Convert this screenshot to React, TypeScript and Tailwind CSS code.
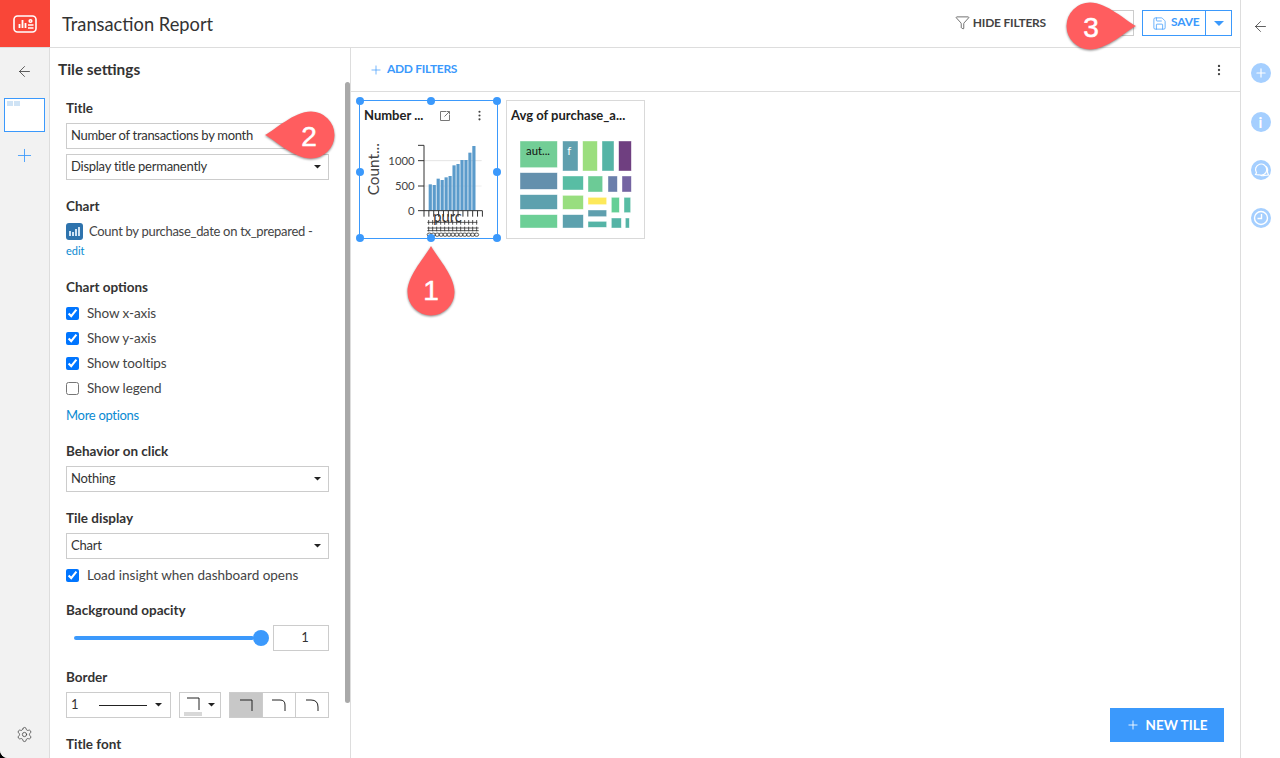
import React from "react";
import { ArrowLeft, Plus, Settings, Funnel, Save, EllipsisVertical } from "lucide-react";

const Caret = ({ color = "#222", w = 7 }: { color?: string; w?: number }) => (
  <svg width={w} height={w / 2} viewBox="0 0 10 5" className="shrink-0"><path d="M0 0h10L5 5z" fill={color} /></svg>
);

const Label = ({ children, className = "" }: { children: React.ReactNode; className?: string }) => (
  <div className={`h-4 text-[13.5px] leading-4 font-bold text-[#333] ${className}`}>{children}</div>
);

const Select = ({ text, className = "" }: { text: string; className?: string }) => (
  <div className={`flex h-[26px] items-center justify-between border border-[#ccc] bg-white pl-1 pr-[7px] text-[13px] tracking-[-0.25px] text-[#333] ${className}`}>
    <span>{text}</span>
    <Caret />
  </div>
);

const Check = ({ label, checked = true, className = "h-[25px]" }: { label: string; checked?: boolean; className?: string }) => (
  <label className={`flex items-center gap-2 text-[13.5px] tracking-[-0.1px] text-[#444] ${className}`}>
    <input type="checkbox" defaultChecked={checked} className="m-0 h-[13px] w-[13px] accent-[#0075ff]" />
    <span>{label}</span>
  </label>
);

const Handle = ({ className }: { className: string }) => (
  <span className={`absolute h-2 w-2 rounded-full bg-[#3b99fc] ${className}`} />
);

const Callout = ({ n, rot, className, numClass = "" }: { n: string; rot: number; className: string; numClass?: string }) => (
  <div className={`absolute flex h-[100px] w-[100px] items-center justify-center ${className}`}>
    <svg width="100" height="100" viewBox="-50 -50 100 100" className="absolute inset-0 overflow-visible drop-shadow-[0_1px_1px_rgba(0,0,0,0.45)]">
      <path transform={`rotate(${rot})`} d="M0 -46 C5 -36 23.5 -17 23.5 0 A23.5 23.5 0 0 1 -23.5 0 C-23.5 -17 -5 -36 0 -46Z" fill="#ff5d5f" />
    </svg>
    <span className={`relative text-[28px] leading-none text-white [-webkit-text-stroke:0.5px_white] [font-family:'Liberation_Sans',sans-serif] ${numClass}`}>{n}</span>
  </div>
);

const bars = [283, 285, 266, 270, 262, 258, 226, 222, 210, 210, 188, 168];
const lato = { fontFamily: "Lato, sans-serif" };

const BarChart = () => (
  <svg width="137" height="110" viewBox="30 114 411 330" className="block">
    <line x1="222" y1="212" x2="395" y2="212" stroke="#e4e4e4" strokeWidth="3" />
    <line x1="222" y1="288" x2="395" y2="288" stroke="#eee" strokeWidth="3" />
    {bars.map((t, i) => (
      <rect key={i} x={236 + i * 11.9} y={t} width="9.6" height={362 - t} fill="#5b9bcb" />
    ))}
    <path d="M222 166V362M204 166h18M204 212h18M204 288h18M204 362h193" stroke="#333" strokeWidth="3" fill="none" />
    {Array.from({ length: 13 }).map((_, i) => (
      <line key={i} x1={222 + i * 14.6} y1="362" x2={222 + i * 14.6} y2="380" stroke="#333" strokeWidth="3" />
    ))}
    <g fill="#444" fontSize="34" textAnchor="end" style={lato}>
      <text x="194" y="224">1000</text>
      <text x="194" y="300">500</text>
      <text x="194" y="374">0</text>
    </g>
    <text transform="translate(88 316) rotate(-90)" x="0" y="0" fontSize="46" fill="#444" style={lato}>Count...</text>
    <text x="250" y="396" fontSize="44" fill="#333" style={lato}>purc</text>
    <path d="M232 397h150M232 414h154M232 422h154" stroke="#333" strokeWidth="2.5" fill="none" />
    {Array.from({ length: 13 }).map((_, i) => (
      <g key={i}>
        <line x1={236 + i * 12} y1="390" x2={236 + i * 12} y2="404" stroke="#333" strokeWidth="2.5" />
        <line x1={236 + i * 12} y1="410" x2={236 + i * 12} y2="424" stroke="#333" strokeWidth="2.5" />
        <ellipse cx={238 + i * 11.8} cy="434" rx="6.5" ry="5" fill="none" stroke="#333" strokeWidth="2.5" />
      </g>
    ))}
  </svg>
);

const cells: [number, number, number, number, string][] = [
  [510, 153, 622, 233, "#72ce96"], [638, 153, 684, 243, "#5f9fae"], [698, 153, 742, 243, "#9bde7e"],
  [756, 153, 792, 243, "#55b4a6"], [806, 153, 844, 243, "#6f3f80"], [510, 248, 622, 298, "#6490ad"],
  [638, 258, 700, 300, "#58bda4"], [714, 258, 758, 306, "#6ccb96"], [774, 258, 802, 306, "#6b7fab"],
  [816, 258, 844, 306, "#7464a2"], [510, 314, 622, 358, "#5da1ae"], [638, 316, 700, 358, "#98de7f"],
  [714, 322, 770, 344, "#fde95a"], [784, 322, 808, 368, "#65cf96"], [822, 322, 842, 368, "#58bda4"],
  [510, 374, 622, 414, "#6ccf96"], [638, 374, 700, 414, "#5da1ae"], [714, 360, 770, 380, "#5f9fae"],
  [714, 394, 770, 412, "#55b4a6"], [784, 384, 814, 414, "#55b4a6"], [826, 384, 838, 414, "#55b4a6"],
];

const Treemap = () => (
  <svg width="137" height="110" viewBox="471 114 411 330" className="block">
    {cells.map(([a, b, c, d, f], i) => (
      <rect key={i} x={a} y={b} width={c - a} height={d - b} fill={f} stroke="#fff" strokeOpacity="0.6" strokeWidth="2" />
    ))}
    <text x="528" y="194" fontSize="34" fill="#111" style={lato}>aut...</text>
    <text x="652" y="194" fontSize="34" fill="#fff" style={lato}>f</text>
  </svg>
);

const RailIcon = ({ children }: { children: React.ReactNode }) => (
  <div className="flex h-5 w-5 items-center justify-center rounded-full bg-[#a5cfff] text-white">{children}</div>
);

const Corner = ({ r = 0, w = 12, gray = false }: { r?: number; w?: number; gray?: boolean }) => (
  <div className={`flex h-full flex-1 items-center justify-center ${gray ? "bg-[#c8c8c8]" : "bg-white"}`}>
    <svg width="14" height="14" viewBox="0 0 14 14"><path d={`M${13 - w} 2H${13 - r}Q13 2 13 ${2 + r}V13`} fill="none" stroke="#222" /></svg>
  </div>
);

export default function App() {
  return (
    <div className="h-[758px] w-[1280px] overflow-hidden bg-black [font-family:Lato,'Noto_Sans',sans-serif]">
      <div className="relative flex h-full w-full overflow-hidden rounded-bl-[8px] bg-white">
        <div className="flex min-w-0 flex-1 flex-col">
          <header className="flex h-12 shrink-0 border-b border-[#ddd]">
            <div className="flex h-[47px] w-[50px] shrink-0 items-center justify-center bg-[#f94638]">
              <svg width="24" height="18" viewBox="0 0 24 18" fill="none" stroke="#fff" strokeWidth="1.6">
                <rect x="1" y="1" width="22" height="16" rx="3.5" />
                <path d="M6.5 13V9M9.5 13V5M12.5 13V8" strokeWidth="1.8" />
                <circle cx="17.5" cy="6" r="1.3" />
                <path d="M15 10h5.5M15 13h5.5" />
              </svg>
            </div>
            <h1 className="ml-3 flex-1 self-center text-[18.3px] font-normal leading-6 text-[#333]">Transaction Report</h1>
            <div className="flex items-center pb-[2px] text-[12px] font-bold tracking-[-0.2px] text-[#444]">
              <Funnel size={15} strokeWidth={1.2} className="mr-[3px]" />
              <span>HIDE FILTERS</span>
            </div>
            <div className="ml-[54px] mt-[10px] h-[26px] w-[34px] border border-[#ccc]" />
            <div className="ml-2 mr-2 mt-[10px] flex h-[26px] w-[90px] border border-[#3b99fc] text-[#3b99fc]">
              <div className="flex flex-1 items-center gap-1 border-r border-[#3b99fc] pl-[9px] text-[12px] font-bold tracking-[-0.2px]">
                <Save size={15} strokeWidth={1.2} />
                <span className="pb-[2px]">SAVE</span>
              </div>
              <div className="flex w-[25px] items-center justify-center"><Caret color="#3b99fc" w={10} /></div>
            </div>
          </header>
          <div className="flex min-h-0 flex-1">
            <aside className="flex w-[50px] shrink-0 flex-col items-center border-r border-[#ddd] bg-[#f2f2f2]">
              <ArrowLeft size={17} strokeWidth={1.1} className="mt-[15px] text-[#333]" />
              <div className="mt-[18px] h-[34px] w-[41px] border border-[#3b99fc] bg-white pl-[2px] pt-[2px]">
                <div className="flex gap-px">
                  <span className="h-[5px] w-[6px] bg-[#cfe3f5]" />
                  <span className="h-[5px] w-[6px] bg-[#cfe3f5]" />
                </div>
              </div>
              <Plus size={21} strokeWidth={1} className="mt-[13px] text-[#3b99fc]" />
              <Settings size={17} strokeWidth={1.1} className="mb-[15px] mt-auto text-[#444]" />
            </aside>
            <section className="relative w-[301px] shrink-0 overflow-hidden border-r border-[#ddd] pl-4 pt-[11px]">
              <div className="-ml-2 h-5 text-[15.4px] font-bold leading-5 text-[#333]">Tile settings</div>
              <div className="w-[263px]">
                <Label className="mt-[21px]">Title</Label>
                <div className="mt-[7px] flex h-[26px] items-center border border-[#ccc] pl-1 text-[13px] tracking-[-0.3px] text-[#333]">Number of transactions by month</div>
                <Select className="mt-[5px]" text="Display title permanently" />
                <Label className="mt-[18px]">Chart</Label>
                <div className="mt-[9px] flex h-[17px] items-center gap-[6px] text-[13px] tracking-[-0.3px] text-[#444]">
                  <span className="flex h-[17px] w-[17px] items-center justify-center rounded-[3px] bg-[#2e73ad]">
                    <svg width="11" height="9" viewBox="0 0 11 9" fill="#cfe3f5"><rect x="0" y="4" width="2" height="5" /><rect x="3" y="5" width="2" height="4" /><rect x="6" y="2" width="2" height="7" /><rect x="9" y="0" width="2" height="9" /></svg>
                  </span>
                  <span>Count by purchase_date on tx_prepared -</span>
                </div>
                <div className="mt-1 h-[14px] text-[11px] leading-[14px] text-[#0a8ad2]">edit</div>
                <Label className="mt-[21px]">Chart options</Label>
                <div className="mt-[6px]">
                  <Check label="Show x-axis" />
                  <Check label="Show y-axis" />
                  <Check label="Show tooltips" />
                  <Check label="Show legend" checked={false} />
                </div>
                <div className="mt-[6px] h-4 text-[13px] leading-4 tracking-[-0.3px] text-[#0a8ad2]">More options</div>
                <Label className="mt-5">Behavior on click</Label>
                <Select className="mt-[7px]" text="Nothing" />
                <Label className="mt-[18px]">Tile display</Label>
                <Select className="mt-[7px]" text="Chart" />
                <Check className="mt-[6px] h-5 tracking-normal" label="Load insight when dashboard opens" />
                <Label className="mt-[17px]">Background opacity</Label>
                <div className="mt-[7px] flex h-[26px] items-center">
                  <div className="ml-2 h-1 flex-1 rounded-full bg-[#3b99fc]" />
                  <div className="-ml-px h-4 w-4 rounded-full bg-[#3b99fc]" />
                  <div className="ml-[4px] flex h-[26px] w-[56px] items-center justify-center border border-[#ccc] pl-2 text-[13px] text-[#333]">1</div>
                </div>
                <Label className="mt-[18px]">Border</Label>
                <div className="mt-[7px] flex h-[26px]">
                  <div className="flex w-[105px] items-center border border-[#ccc] pl-1 pr-2 text-[13px] text-[#333]">
                    <span>1</span>
                    <span className="ml-[20px] h-px w-12 bg-[#222]" />
                    <span className="ml-auto"><Caret /></span>
                  </div>
                  <div className="ml-2 flex w-[42px] items-center gap-[6px] border border-[#ccc] pl-[4px]">
                    <svg width="18" height="22" viewBox="0 0 18 22" fill="none"><path d="M3 4H15V16" stroke="#222" /><rect x="0" y="18" width="18" height="4" fill="#d8d8d8" /></svg>
                    <Caret />
                  </div>
                  <div className="ml-2 flex w-[100px] border border-[#ccc] [&>div+div]:border-l [&>div+div]:border-[#ccc]">
                    <Corner gray />
                    <Corner r={5} w={13} />
                    <Corner r={7} />
                  </div>
                </div>
                <Label className="mt-[18px]">Title font</Label>
              </div>
              <div className="absolute right-0 top-[34px] h-[621px] w-[5px] rounded-full bg-[#a9a9a9]" />
            </section>
            <main className="relative flex min-w-0 flex-1 flex-col">
              <div className="flex h-11 shrink-0 items-center border-b border-[#ddd] pl-[18px] pr-[14px] text-[#3b99fc]">
                <Plus size={14} strokeWidth={1.2} />
                <span className="ml-[4px] pb-px text-[12px] font-bold tracking-[-0.3px]">ADD FILTERS</span>
                <EllipsisVertical size={14} className="ml-auto text-[#444]" />
              </div>
              <div className="flex gap-2 pl-2 pt-2">
                <div className="relative h-[139px] w-[139px] border border-[#3b99fc] bg-white">
                  <Handle className="-left-1 -top-1" />
                  <Handle className="left-[67px] -top-1" />
                  <Handle className="-right-1 -top-1" />
                  <Handle className="-left-1 top-[67px]" />
                  <Handle className="-right-1 top-[67px]" />
                  <Handle className="-bottom-1 -left-1" />
                  <Handle className="-bottom-1 left-[67px]" />
                  <Handle className="-bottom-1 -right-1" />
                  <div className="flex h-[27px] items-center pl-1 pr-[11px] pt-[2px] text-[13px] font-bold text-[#222]">
                    <span>Number ...</span>
                    <svg width="12" height="12" viewBox="0 0 12 12" fill="none" stroke="#777" className="ml-auto mr-[22px]"><path d="M7 1.5H1.5V10.5H10.5V5M5.5 6.5L10.5 1.5M7.5 1.5H10.5V4.5" /></svg>
                    <EllipsisVertical size={13} className="text-[#444]" />
                  </div>
                  <BarChart />
                </div>
                <div className="h-[139px] w-[139px] border border-[#d9d9d9] bg-white">
                  <div className="flex h-[27px] items-center pl-1 pt-[2px] text-[13px] font-bold text-[#222]">Avg of purchase_a...</div>
                  <Treemap />
                </div>
              </div>
              <div className="absolute bottom-4 right-[16px] flex h-[34px] w-[114px] items-center justify-center gap-[5px] bg-[#3b99fc] text-[13.5px] font-bold text-white">
                <Plus size={14} strokeWidth={1.5} />
                <span>NEW TILE</span>
              </div>
            </main>
          </div>
        </div>
        <aside className="flex w-10 shrink-0 flex-col items-center border-l border-[#ddd] pt-[18px]">
          <ArrowLeft size={17} strokeWidth={1.1} className="text-[#333]" />
          <div className="mt-[28px]"><RailIcon><Plus size={14} strokeWidth={2} /></RailIcon></div>
          <div className="mt-[29px]"><RailIcon><span className="text-[15px] font-bold leading-none">i</span></RailIcon></div>
          <div className="mt-[28px]">
            <RailIcon>
              <svg width="20" height="20" viewBox="0 0 20 20" fill="none" stroke="#fff" strokeWidth="1.2" className="overflow-visible"><path d="M4.5 14.5L5.5 12.8A5.6 5.6 0 1 1 8 14.8C6.8 14.9 5.6 14.8 4.5 14.5Z" /><path d="M15 6.5C16.6 8 17 10 16.4 12L17.4 15L13.5 15.4C12 16 10.6 15.8 9.5 15" /></svg>
            </RailIcon>
          </div>
          <div className="mt-[28px]">
            <RailIcon>
              <svg width="16" height="16" viewBox="0 0 16 16" fill="none" stroke="#fff" strokeWidth="1.4"><circle cx="8" cy="8" r="6.5" /><path d="M8.5 4V8.5H4.5" /></svg>
            </RailIcon>
          </div>
        </aside>

        <Callout n="1" rot={0} className="left-[381px] top-[242px]" numClass="-mt-[2px]" />
        <Callout n="2" rot={-90} className="left-[261px] top-[85px]" numClass="-ml-[4px] mt-[3px]" />
        <Callout n="3" rot={90} className="left-[1040px] top-[-24px]" numClass="ml-[2px] mt-[3px]" />
      </div>
    </div>
  );
}
